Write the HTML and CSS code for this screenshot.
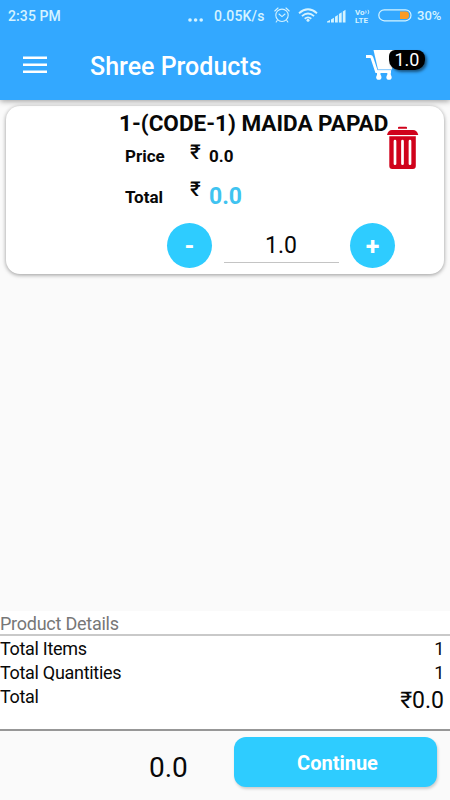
FILE: index.html
```
<!DOCTYPE html>
<html lang="en">
<head>
<meta charset="utf-8">
<title>Shree Products</title>
<link rel="stylesheet" href="styles.css">
</head>
<body>
<div class="screen">
  <header class="header">
    <div class="status">
      <span class="clock">2:35 PM</span>
      <svg class="dots" width="16" height="6" viewBox="0 0 16 6" fill="currentColor"><circle cx="2" cy="3" r="1.8"/><circle cx="7.6" cy="3" r="1.8"/><circle cx="13.2" cy="3" r="1.8"/></svg>
      <span class="speed">0.05K/s</span>
      <svg class="alarm" width="16" height="16" viewBox="0 0 16 16" fill="none" stroke="currentColor" stroke-width="1.1" stroke-linecap="round"><circle cx="8" cy="8.3" r="6.2"/><path d="M.8 4 4 1M15.2 4 12 1M3.2 13.5 2.2 15M12.8 13.5l1 1.5M5 7l3 2.6L11 7"/></svg>
      <svg class="wifi" width="20" height="14" viewBox="0 0 20 14" fill="none" stroke="currentColor" stroke-width="1.8"><path d="M1 5.2Q10-2.6 19 5.2M3.9 8.1q6.1-5.2 12.2 0M6.7 10.7q3.3-2.7 6.6 0"/><circle cx="10" cy="12.3" r="1.5" fill="currentColor" stroke="none"/></svg>
      <svg class="signal" width="19" height="14" viewBox="0 0 19 14" fill="currentColor"><path d="M0 13.5v-1l3-1.5v2.5zM4 10.500l2.900-1.700v4.700H4zM8 7.700l2.800-1.700v7.500H8zM11.900 5l2.800-1.700v10.200h-2.800zM15.800 2.500l2.700-1.700v12.700h-2.700z"/></svg>
      <span class="volte"><span>Vo<svg width="5" height="6" viewBox="0 0 5 5" fill="none" stroke="currentColor" stroke-width=".9"><path d="M.7 1q1 1.5 0 3M3 .3q1.8 2.2 0 4.4"/></svg></span><span>LTE</span></span>
      <svg class="battery" width="34" height="13" viewBox="0 0 34 13"><rect x=".8" y=".8" width="32.2" height="11" rx="5.5" fill="none" stroke="currentColor" stroke-width="1.2"/><path d="M22 2.5h6q3 0 3 3.8t-3 3.8h-6z" fill="#fb9b23"/></svg>
      <span class="percent">30%</span>
    </div>
    <div class="appbar">
      <svg class="menu" width="24" height="18" viewBox="0 0 24 18" fill="currentColor"><path d="M0 .5h24V3H0zM0 7.5h24V10H0zM0 14.5h24V17H0z"/></svg>
      <h1 class="title">Shree Products</h1>
      <div class="cart">
        <svg width="30" height="30" viewBox="0 0 30 30"><path d="M0 6.500H4.500q1 0 1.400 1.200L10.500 21.500H25" fill="none" stroke="#fff" stroke-width="2.800"/><path d="M7.500 0H29l-3 19.500H12z" fill="#fff"/><path d="M11 23h3.500v4H11zM21.300 23h3.500v4h-3.500z" fill="#fff"/><circle cx="12.800" cy="27.200" r="2.600" fill="#fff"/><circle cx="23" cy="27.200" r="2.600" fill="#fff"/><path d="M11.500 19.800H26" stroke="#8ccbff" stroke-width=".7"/></svg>
        <span class="badge">1.0</span>
      </div>
    </div>
  </header>

  <main class="list">
    <article class="card">
      <div class="info">
        <h2 class="name">1-(CODE-1) MAIDA PAPAD</h2>
        <div class="line price"><span class="label">Price</span><span class="rupee">₹</span><span class="amount">0.0</span></div>
        <div class="line sum"><span class="label">Total</span><span class="rupee">₹</span><span class="amount accent">0.0</span></div>
        <div class="stepper">
          <button class="round">-</button>
          <span class="qty">1.0</span>
          <button class="round">+</button>
        </div>
      </div>
      <svg class="trash" width="32" height="44" viewBox="0 0 32 44"><path d="M11 2.8V1.6Q11 .8 12 .8h7q1 0 1 .8v1.2zM5 4h21q4 0 5.3 5H0Q1.2 4 5 4zM2.3 10.200h26.500V40q0 3-3 3H5.300q-3 0-3-3z" fill="#d0021b"/><path d="M8 15.200v22.500M15.500 15.200v22.500M23 15.200v22.500" stroke="#fff" stroke-width="2.700" stroke-linecap="round"/></svg>
    </article>
  </main>

  <section class="details">
    <h3 class="heading">Product Details</h3>
    <div class="row"><span class="key">Total Items</span><span class="count">1</span></div>
    <div class="row"><span class="key">Total Quantities</span><span class="count">1</span></div>
    <div class="row"><span class="key">Total</span><span class="grand">₹0.0</span></div>
  </section>

  <footer class="footer">
    <span class="total">0.0</span>
    <button class="continue">Continue</button>
  </footer>
</div>
</body>
</html>
```
FILE: styles.css
```
* { box-sizing: border-box; }
body { margin: 0; font-family: Roboto, "Noto Sans", sans-serif; color: #080808; }
h1, h2, h3 { margin: 0; }
button { border: 0; padding: 0; font-family: inherit; color: #fff; background: #2eccff; }
svg { display: block; flex: none; }
.screen { width: 450px; height: 800px; display: flex; flex-direction: column; background: #fafafa; overflow: hidden; }

.header { flex: none; height: 100px; background: #33a8ff; color: #fff; box-shadow: 0 1px 6px rgba(0,0,0,.4); z-index: 1; }
.status { height: 32px; display: flex; align-items: center; padding-left: 8px; color: #d5f3ff; font-size: 14px; font-weight: 500; line-height: 32px; white-space: nowrap; }
.clock { width: 180px; letter-spacing: .1px; }
.dots { margin-top: 8px; }
.speed { width: 52px; margin-left: 10px; letter-spacing: .2px; }
.alarm { margin-left: 8px; margin-top: -3px; }
.wifi { margin-left: 8px; margin-top: -2px; }
.signal { margin-left: 9px; margin-top: -1px; }
.volte { width: 15px; margin-left: 9px; font-size: 8px; line-height: 9px; font-weight: 700; }
.volte > span { display: flex; align-items: center; height: 7px; }
.volte > span + span { margin-top: 1px; }
.battery { margin-left: 8px; margin-top: -1px; }
.percent { margin-left: 5px; font-size: 13px; }
.appbar { height: 68px; display: flex; align-items: center; padding: 0 18px 0 23px; }
.menu { margin-top: -2px; }
.title { margin-left: 43px; padding-top: 2px; font-size: 25px; font-weight: 500; line-height: 68px; white-space: nowrap; }
.cart { position: relative; width: 66px; height: 30px; margin-left: auto; margin-top: -2px; }
.badge { position: absolute; left: 23px; top: 0; width: 36px; height: 20px; border-radius: 6px 8px 10px 10px; background: #000; box-shadow: 2px 2px 3px rgba(0,0,0,.5); font-size: 18px; line-height: 20px; text-align: center; }

.list { flex: 1; padding: 6px; }
.card { height: 168px; display: flex; background: #fff; border-radius: 14px; box-shadow: 0 1px 4px rgba(0,0,0,.4); }
.info { width: 269px; margin-left: 113px; }
.name { margin-top: 2px; font-size: 22.5px; font-weight: 700; line-height: 30px; white-space: nowrap; }
.line { display: grid; grid-template-columns: 64px 20px auto; padding-left: 6px; font-weight: 700; }
.label, .amount { font-size: 17px; line-height: 36px; }
.rupee { padding-left: 1px; font-size: 20.5px; line-height: 28px; font-weight: 500; }
.price { height: 36px; }
.sum { height: 42px; padding-top: 5px; }
.sum .label { line-height: 37px; }
.sum .rupee { line-height: 20px; }
.line .accent { color: #3fc3f0; font-size: 23px; line-height: 35px; }
.stepper { display: flex; width: 228px; margin: 7px 0 0 48px; justify-content: space-between; }
.round { width: 45px; height: 45px; border-radius: 50%; font-size: 25px; font-weight: 700; line-height: 47px; }
.qty { width: 115px; height: 40px; border-bottom: 1px solid #c4c4c4; text-align: center; font-size: 23px; line-height: 46px; }
.trash { margin: 20px 0 0 -1px; }

.details { flex: none; height: 120px; background: #fff; border-bottom: 2px solid #979797; }
.heading { height: 25px; border-bottom: 2px solid #c9c9c9; color: #777; font-size: 18px; letter-spacing: -.25px; font-weight: 400; line-height: 26px; }
.row { height: 24px; display: flex; justify-content: space-between; padding-right: 6px; font-size: 18px; letter-spacing: -.3px; line-height: 26px; }
.grand { font-size: 23px; line-height: 34px; letter-spacing: 0; }
.footer { flex: none; height: 69px; display: flex; padding-left: 149px; }
.total { width: 85px; font-size: 28px; line-height: 73px; }
.continue { width: 203px; height: 50px; margin-top: 6px; border-radius: 12px; box-shadow: 1px 2px 3px rgba(0,0,0,.18); font-size: 20px; font-weight: 700; line-height: 52px; padding-left: 4px; }
```
